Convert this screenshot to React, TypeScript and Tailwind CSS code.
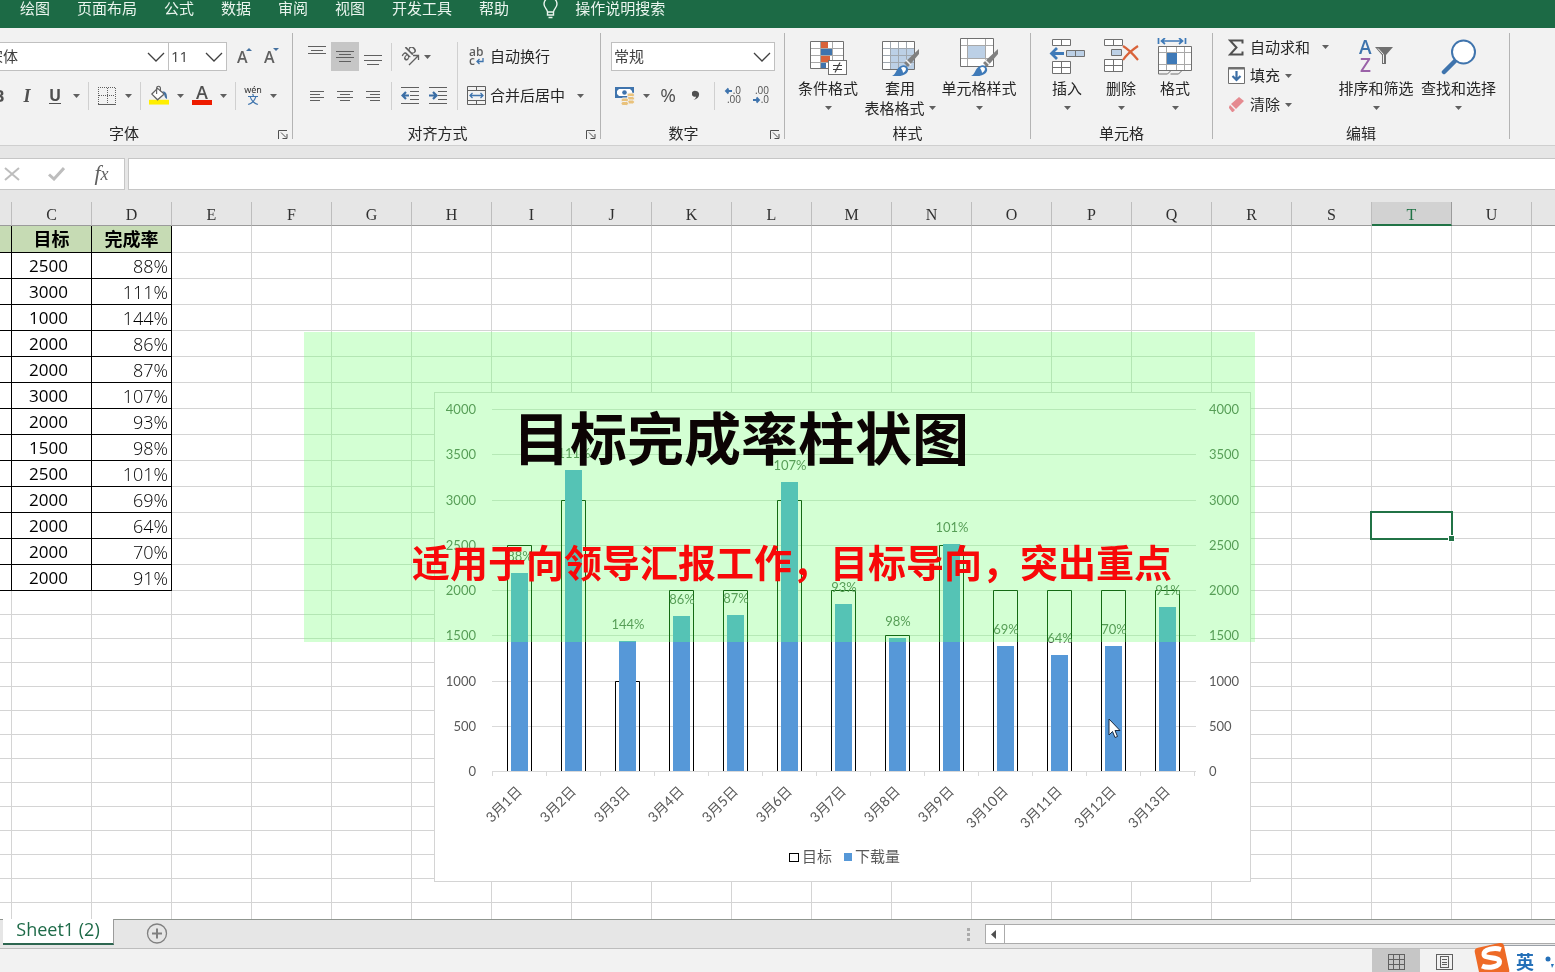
import type { ReactNode } from "react";

const MENU = ["绘图", "页面布局", "公式", "数据", "审阅", "视图", "开发工具", "帮助"];

const COLUMNS = "CDEFGHIJKLMNOPQRSTUV".split("");

type Day = { date: string; target: number; actual: number; rate: string };

const DAYS: Day[] = [
  { date: "3月1日", target: 2500, actual: 2185, rate: "88%" },
  { date: "3月2日", target: 3000, actual: 3330, rate: "111%" },
  { date: "3月3日", target: 1000, actual: 1440, rate: "144%" },
  { date: "3月4日", target: 2000, actual: 1715, rate: "86%" },
  { date: "3月5日", target: 2000, actual: 1725, rate: "87%" },
  { date: "3月6日", target: 3000, actual: 3195, rate: "107%" },
  { date: "3月7日", target: 2000, actual: 1850, rate: "93%" },
  { date: "3月8日", target: 1500, actual: 1475, rate: "98%" },
  { date: "3月9日", target: 2500, actual: 2510, rate: "101%" },
  { date: "3月10日", target: 2000, actual: 1385, rate: "69%" },
  { date: "3月11日", target: 2000, actual: 1285, rate: "64%" },
  { date: "3月12日", target: 2000, actual: 1385, rate: "70%" },
  { date: "3月13日", target: 2000, actual: 1815, rate: "91%" },
];

/* ---------- small shared pieces ---------- */

function Arrow() {
  return (
    <svg width="7" height="4" viewBox="0 0 7 4" className="shrink-0">
      <path d="M0 0h7L3.5 4z" fill="#606060" />
    </svg>
  );
}

function Drop({ label }: { label: string }) {
  return (
    <button type="button" aria-label={label} className="flex h-7 w-[7px] shrink-0 items-center">
      <Arrow />
    </button>
  );
}

function Tool({ label, children, className = "w-5" }: { label: string; children: ReactNode; className?: string }) {
  return (
    <button
      type="button"
      aria-label={label}
      className={`flex h-[29px] shrink-0 items-center justify-center text-[#505050] ${className}`}
    >
      {children}
    </button>
  );
}

function Rule() {
  return <span className="h-7 w-px shrink-0 bg-[#d0d0d0]" />;
}

function Combo({ label, value, className, pad }: { label: string; value: string; className: string; pad: string }) {
  return (
    <div className={`relative h-[29px] shrink-0 ${className}`}>
      <select
        aria-label={label}
        defaultValue={value}
        className={`h-full w-full appearance-none border border-[#c0c0c0] bg-white text-[15px] text-[#404040] outline-none ${pad}`}
      >
        <option>{value}</option>
      </select>
      <svg width="18" height="10" viewBox="0 0 18 10" className="pointer-events-none absolute right-1 top-[10px]">
        <path d="M1 1l8 8 8-8" fill="none" stroke="#404040" strokeWidth="1.3" />
      </svg>
    </div>
  );
}

function Group({
  name,
  className,
  launcher,
  children,
}: {
  name: string;
  className: string;
  launcher?: boolean;
  children: ReactNode;
}) {
  return (
    <section aria-label={name} className={`flex h-[106px] shrink-0 flex-col border-r border-[#b4b4b4] ${className}`}>
      {children}
      <div className="mt-auto flex items-end leading-3">
        <span className="flex-1 text-center">{name}</span>
        {launcher && (
          <button type="button" aria-label={`${name}设置`} className="flex h-[9px] w-[18px] justify-center">
            <svg width="10" height="9" viewBox="0 0 10 9" fill="none" stroke="#505050">
              <path d="M.5 9V.5H9M3 2.5l5 5M9 4v4.5H4.5" />
            </svg>
          </button>
        )}
      </div>
    </section>
  );
}

function BigButton({ icon, lines, arrow, className }: { icon: ReactNode; lines: string[]; arrow?: boolean; className: string }) {
  return (
    <button type="button" className={`flex shrink-0 flex-col items-center pt-[5px] ${className}`}>
      <span className="mb-[2px] flex h-[38px] items-center justify-center">{icon}</span>
      {lines.map((l, i) => (
        <span key={l} className="flex items-center gap-1 whitespace-nowrap leading-5">
          {l}
          {i === 1 && <Arrow />}
        </span>
      ))}
      {arrow && (
        <span className="flex h-5 items-center">
          <Arrow />
        </span>
      )}
    </button>
  );
}

/* ---------- icons ---------- */

function Lines({ rows, w, h }: { rows: [number, number, number][]; w: number; h: number }) {
  return (
    <svg width={w} height={h} viewBox={`0 0 ${w} ${h}`} shapeRendering="crispEdges">
      {rows.map(([x, y, len]) => (
        <rect key={y} x={x} y={y} width={len} height="1" fill="#606060" />
      ))}
    </svg>
  );
}

function GrowFont({ down }: { down?: boolean }) {
  return (
    <svg width="17" height="20" viewBox="0 0 17 20">
      <text x="1" y="16" fontFamily="Open Sans" fontSize="16" fontWeight="600" fill="#606060">
        A
      </text>
      <path d={down ? "M10 1h6l-3 3z" : "M10 4h6l-3-3z"} fill="#44719f" />
    </svg>
  );
}

function BordersIcon() {
  return (
    <svg width="18" height="18" viewBox="0 0 18 18" fill="none" stroke="#606060" shapeRendering="crispEdges">
      <path d="M.5 17V.5h17V17M9 1v16M1 8.5h16" strokeDasharray="1 1" />
      <path d="M0 17h18" />
    </svg>
  );
}

function BucketIcon() {
  return (
    <svg width="21" height="21" viewBox="0 0 21 21">
      <rect y="15" width="21" height="5" fill="#ffee00" />
      <path d="M9 3l7 6-7 6-6-6z" fill="#fff" stroke="#606060" strokeWidth="1.3" />
      <path d="M8 9V3c0-3 4-3 4 0v3" fill="none" stroke="#606060" strokeWidth="1.2" />
      <path d="M14 6c4 0 5 3 5 8-2 0-3-3-3-5z" fill="#44719f" />
    </svg>
  );
}

function FontColorIcon() {
  return (
    <svg width="20" height="20" viewBox="0 0 20 20">
      <text x="10" y="13" textAnchor="middle" fontFamily="Open Sans" fontSize="18" fontWeight="600" fill="#505050">
        A
      </text>
      <rect y="14" width="20" height="5" fill="#ee1c00" />
    </svg>
  );
}

function PhoneticIcon() {
  return (
    <svg width="18" height="20" viewBox="0 0 18 20">
      <text x="9" y="7" textAnchor="middle" fontFamily="Noto Sans" fontSize="9" fill="#303030">
        wén
      </text>
      <text x="9" y="18" textAnchor="middle" fontFamily="Noto Sans CJK SC" fontSize="11" fontWeight="500" fill="#3f74ad">
        文
      </text>
    </svg>
  );
}

function OrientationIcon() {
  return (
    <svg width="20" height="20" viewBox="0 0 20 20">
      <text x="5" y="15" transform="rotate(-45 5 14)" fontFamily="Open Sans" fontSize="14" fontWeight="600" fill="#606060">
        ab
      </text>
      <path d="M9 18L18 9M13 8.500h5.500V13" fill="none" stroke="#606060" strokeWidth="1.3" />
    </svg>
  );
}

function IndentIcon({ out }: { out?: boolean }) {
  return (
    <svg width="18" height="17" viewBox="0 0 18 17">
      <path d="M0 .5h18M9 4.500h9M9 8.500h9M9 12.500h9M0 16.500h18" stroke="#606060" shapeRendering="crispEdges" />
      <path
        d={out ? "M8 8.500H2M5 5L1.500 8.500 5 12" : "M0 8.500h6M4 5l3.500 3.500L4 12"}
        fill="none"
        stroke="#3b6ea5"
        strokeWidth="2.200"
      />
    </svg>
  );
}

function WrapIcon() {
  return (
    <svg width="16" height="19" viewBox="0 0 16 19">
      <g fontFamily="Open Sans" fontSize="12" fontWeight="600" fill="#606060">
        <text x="1" y="9">
          ab
        </text>
        <text x="1" y="18">
          c
        </text>
      </g>
      <path d="M15 11v3.500H9M11.500 12L9 14.500l2.500 2.500" fill="none" stroke="#3f74ad" strokeWidth="1.3" />
    </svg>
  );
}

function MergeIcon() {
  return (
    <svg width="19" height="19" viewBox="0 0 19 19" fill="none">
      <path d="M.5.5h18v18H.5zM.5 4.500h18M.5 14.500h18M9.500.5v4M9.500 14.500v4" stroke="#606060" />
      <path d="M3 9.500h13M5.500 7L3 9.500 5.500 12M13.500 7L16 9.500 13.500 12" stroke="#3f74ad" strokeWidth="1.3" />
    </svg>
  );
}

function MoneyIcon() {
  return (
    <svg width="20" height="20" viewBox="0 0 20 20">
      <rect y="1" width="19" height="11" fill="#3f74ad" />
      <path d="M4 3h11l2 2v3l-2 2H4L2 8V5z" fill="#fff" />
      <circle cx="9.500" cy="6.500" r="2.300" fill="#3f74ad" />
      <g fill="#e9c27c" stroke="#f2f2f2" strokeWidth="1">
        <rect x="12" y="7" width="7.500" height="4" rx="2" />
        <rect x="12" y="10.500" width="7.500" height="4" rx="2" />
        <rect x="12" y="14" width="7.500" height="4" rx="2" />
        <rect x="6" y="12" width="7.500" height="4" rx="2" />
        <rect x="6" y="15.500" width="7.500" height="4" rx="2" />
      </g>
    </svg>
  );
}

function DecimalIcon({ less }: { less?: boolean }) {
  return (
    <svg width="18" height="19" viewBox="0 0 18 19">
      <g fontFamily="Open Sans" fontSize="10" fontWeight="500" fill="#505050" textAnchor="end">
        <text x="17" y="8">
          {less ? ".00" : ".0"}
        </text>
        <text x="17" y="17">
          {less ? ".0" : ".00"}
        </text>
      </g>
      <path
        d={less ? "M1 14h6M4.500 11.500L7 14l-2.500 2.500" : "M8 5H2M4.500 2.500L2 5l2.500 2.500"}
        fill="none"
        stroke="#3f74ad"
        strokeWidth="1.900"
      />
    </svg>
  );
}

function Brush() {
  return (
    <g>
      <path d="M38 11v5L27 29l-4-4z" fill="#808080" />
      <path d="M25 22l5 5" stroke="#f2f2f2" strokeWidth="1.500" />
      <path d="M11 38c4-1 4-8 9-10 4-2 8 1 7 5-2 5-10 6-16 5z" fill="#3f7ab8" />
      <path d="M20 30c2-2 5-1 5 1s-2 3-3 4c0-2-1-3-2-5z" fill="#fff" />
    </g>
  );
}

function ConditionalIcon() {
  return (
    <svg width="36" height="38" viewBox="1 -2 36 38" className="overflow-visible">
      <path d="M1.500 1.500h33v27h-33z" fill="#fff" />
      <rect x="12" y="2" width="7" height="6" fill="#d9633a" />
      <rect x="12" y="9" width="11" height="6" fill="#3f74ad" />
      <rect x="12" y="16" width="9" height="6" fill="#d9633a" />
      <rect x="12" y="23" width="5" height="5" fill="#3f74ad" />
      <path d="M1.500 8.500h33M1.500 15.500h33M1.500 22.500h33M11.500 1.500v27M23.500 1.500v27" stroke="#a8a8a8" />
      <path d="M1.500 1.500h33v27h-33z" fill="none" stroke="#707070" />
      <rect x="19.500" y="20.500" width="18" height="14" fill="#fff" stroke="#707070" />
      <path d="M24 25.500h9M24 29.500h9M31 22.500l-5 10" stroke="#404040" strokeWidth="1.200" />
    </svg>
  );
}

function TableFormatIcon() {
  return (
    <svg width="38" height="38" viewBox="0 0 38 38">
      <path d="M1.500 3.500h32v28h-32z" fill="#fff" />
      <path d="M10 10h23v21H10z" fill="#bcd0e6" />
      <path d="M1.500 10.500h32M1.500 17.500h32M1.500 24.500h32M9.500 3.500v28M17.500 3.500v28M25.500 3.500v28" stroke="#a0a8b0" />
      <path d="M1.500 3.500h32v28h-32z" fill="none" stroke="#707070" />
      <Brush />
    </svg>
  );
}

function CellStyleIcon() {
  return (
    <svg width="38" height="38" viewBox="0 0 38 38">
      <path d="M.5.5h33v28H.5z" fill="#fff" />
      <path d="M.5 7.500h33M.5 20.500h33M7.500.5v28M25.500.5v28" stroke="#a8a8a8" />
      <rect x="8" y="8" width="17" height="12" fill="#bcd0e6" />
      <path d="M.5.5h33v28H.5z" fill="none" stroke="#707070" />
      <Brush />
    </svg>
  );
}

function InsertIcon() {
  return (
    <svg width="36" height="36" viewBox="0 0 36 36">
      <g fill="#fff" stroke="#707070">
        <path d="M3.500.5h18v6h-18zM12.500.5v6M3.500 22.500h18v12h-18zM12.500 22.500v12M3.500 28.500h18" />
        <path d="M17.500 11.500h18v6h-18zM26.500 11.500v6" fill="#bcd0e6" />
      </g>
      <path d="M15 14.500H3M8 9l-5.500 5.500L8 20" fill="none" stroke="#3f7ab8" strokeWidth="2.800" />
    </svg>
  );
}

function DeleteIcon() {
  return (
    <svg width="36" height="36" viewBox="0 0 36 36">
      <g fill="#fff" stroke="#707070">
        <path d="M1.500.5h18v6h-18zM10.500.5v6M1.500 20.500h18v12h-18zM10.500 20.500v12M1.500 26.500h18" />
        <path d="M8.500 10.500h10v6h-10z" fill="#bcd0e6" />
      </g>
      <path d="M20 7c5 3 10 8 15 14M35 7c-6 4-11 8-15 14" fill="none" stroke="#d9633a" strokeWidth="2.200" />
    </svg>
  );
}

function FormatIcon() {
  return (
    <svg width="36" height="38" viewBox="0 0 36 38">
      <path d="M1.500 0v6M28.500 0v6M4 3h22M8 0L4.500 3 8 6M22 0l3.500 3L22 6" fill="none" stroke="#3f7ab8" strokeWidth="1.700" />
      <path d="M1.500 8.500h33v24h-33z" fill="#fff" />
      <path d="M1.500 14.500h33M1.500 26.500h33M9.500 8.500v24M19.500 8.500v24M27.500 8.500v24" stroke="#a8a8a8" />
      <rect x="10" y="15" width="10" height="11" fill="#3f7ab8" />
      <path d="M1.500 8.500h33v24h-33z" fill="none" stroke="#707070" />
      <path d="M1.500 32v4h9l3-3M13.500 36h8l3-3" fill="none" stroke="#707070" />
    </svg>
  );
}

function SortIcon() {
  return (
    <svg width="36" height="36" viewBox="0 0 36 36">
      <g fontFamily="Open Sans" fontSize="19" fontWeight="600">
        <text x="1" y="15" fill="#3f74ad">
          A
        </text>
        <text x="2" y="33" fill="#9a62a8">
          Z
        </text>
      </g>
      <path d="M17 8h18l-7 8v9h-4v-9z" fill="#707070" />
      <path d="M20 9.500l5.500 6V24" fill="none" stroke="#f2f2f2" />
    </svg>
  );
}

function FindIcon() {
  return (
    <svg width="36" height="36" viewBox="0 0 36 36">
      <path d="M14 22L3 33" stroke="#3f74ad" strokeWidth="4.500" strokeLinecap="round" />
      <circle cx="22.500" cy="13" r="11.500" fill="#fff" stroke="#3f74ad" strokeWidth="2" />
    </svg>
  );
}

function SumIcon() {
  return (
    <svg width="16" height="17" viewBox="0 0 16 17">
      <path d="M14.500 4.500V1.500H2l6.500 7L2 15.500h12.500v-3" fill="none" stroke="#505050" strokeWidth="2" />
    </svg>
  );
}

function FillIcon() {
  return (
    <svg width="17" height="17" viewBox="0 0 17 17">
      <path d="M.5.5h16v16H.5z" fill="#fff" stroke="#707070" />
      <path d="M.5 1.500h16" stroke="#707070" strokeWidth="2" />
      <path d="M8.500 4v8M4.500 9l4 4 4-4" fill="none" stroke="#3b6ea5" strokeWidth="2.200" />
    </svg>
  );
}

function EraserIcon() {
  return (
    <svg width="17" height="17" viewBox="0 0 17 17">
      <path d="M11 1l5 4-8 8-5-5z" fill="#e58a90" />
      <path d="M2 9l5 5-2 2H4l-3-4v-1z" fill="#e58a90" />
    </svg>
  );
}

/* ---------- ribbon ---------- */

const TOP: [number, number, number][] = [[0, 0, 18], [3, 4, 12], [0, 7, 18]];
const MIDDLE: [number, number, number][] = [[0, 0, 18], [3, 3, 12], [0, 6, 18], [3, 10, 12]];
const BOTTOM: [number, number, number][] = [[0, 0, 18], [3, 5, 12], [0, 5, 18], [3, 9, 12]];
const LEFT: [number, number, number][] = [[0, 0, 14], [0, 3, 10], [0, 6, 14], [0, 9, 10]];
const CENTER: [number, number, number][] = [[0, 0, 16], [3, 3, 10], [0, 6, 16], [3, 9, 10]];
const RIGHT: [number, number, number][] = [[0, 0, 14], [4, 3, 10], [0, 6, 14], [4, 9, 10]];

function Ribbon() {
  return (
    <div className="flex h-[118px] shrink-0 overflow-hidden border-b border-[#cfcfcf] bg-[#f2f2f2] pt-[5px]">
      <Group name="字体" launcher className="-ml-[26px] w-[319px]">
        <div className="mt-[9px] flex">
          <Combo label="字体" value="宋体" className="w-[195px]" pad="pl-[13px]" />
          <Combo label="字号" value="11" className="-ml-px w-[59px]" pad="pl-[2px]" />
          <Tool label="增大字号" className="ml-1 w-[27px]">
            <GrowFont />
          </Tool>
          <Tool label="减小字号" className="w-[27px]">
            <GrowFont down />
          </Tool>
        </div>
        <div className="mt-[10px] flex items-center gap-2 pl-[15px]">
          <Tool label="加粗">
            <b className="text-base">B</b>
          </Tool>
          <Tool label="倾斜">
            <b className="font-['Liberation_Serif',serif] text-lg italic">I</b>
          </Tool>
          <Tool label="下划线">
            <span className="border-b border-[#505050] text-base font-bold leading-4">U</span>
          </Tool>
          <Drop label="下划线选项" />
          <Rule />
          <Tool label="边框">
            <BordersIcon />
          </Tool>
          <Drop label="边框选项" />
          <Rule />
          <Tool label="填充颜色">
            <BucketIcon />
          </Tool>
          <Drop label="填充颜色选项" />
          <Tool label="字体颜色">
            <FontColorIcon />
          </Tool>
          <Drop label="字体颜色选项" />
          <Rule />
          <Tool label="拼音" className="w-[18px]">
            <PhoneticIcon />
          </Tool>
          <Drop label="拼音选项" />
        </div>
      </Group>

      <Group name="对齐方式" launcher className="w-[308px]">
        <div className="mt-[9px] flex pl-[10px]">
          <div className="grid gap-[10px]">
            <div className="flex items-center">
              <Tool label="顶端对齐" className="w-7 pb-3">
                <Lines rows={TOP} w={18} h={9} />
              </Tool>
              <Tool label="垂直居中" className="w-7 bg-[#c6c6c6]">
                <Lines rows={MIDDLE} w={18} h={11} />
              </Tool>
              <Tool label="底端对齐" className="w-7 pt-1.5">
                <Lines rows={BOTTOM} w={18} h={10} />
              </Tool>
            </div>
            <div className="flex items-center">
              <Tool label="左对齐" className="w-7">
                <Lines rows={LEFT} w={14} h={10} />
              </Tool>
              <Tool label="居中" className="w-7">
                <Lines rows={CENTER} w={16} h={10} />
              </Tool>
              <Tool label="右对齐" className="w-7">
                <Lines rows={RIGHT} w={14} h={10} />
              </Tool>
            </div>
          </div>
          <div className="ml-1 grid w-[66px] gap-[10px]">
            <div className="flex items-center">
              <Rule />
              <Tool label="方向" className="ml-1 w-7">
                <OrientationIcon />
              </Tool>
              <Drop label="方向选项" />
            </div>
            <div className="flex items-center">
              <Rule />
              <Tool label="减少缩进量" className="ml-1 w-7">
                <IndentIcon out />
              </Tool>
              <Tool label="增加缩进量" className="w-7">
                <IndentIcon />
              </Tool>
            </div>
          </div>
          <div className="grid gap-[10px] border-l border-[#d0d0d0] pl-2">
            <button type="button" className="flex h-[29px] items-center gap-1">
              <span className="flex w-5 justify-center">
                <WrapIcon />
              </span>
              自动换行
            </button>
            <div className="flex items-center gap-3">
              <button type="button" className="flex h-[29px] items-center gap-1">
                <span className="flex w-5 justify-center">
                  <MergeIcon />
                </span>
                合并后居中
              </button>
              <Drop label="合并选项" />
            </div>
          </div>
        </div>
      </Group>

      <Group name="数字" launcher className="w-[184px]">
        <div className="mt-[9px] flex pl-[10px]">
          <Combo label="数字格式" value="常规" className="w-[164px]" pad="pl-[2px]" />
        </div>
        <div className="mt-[10px] flex items-center gap-2 pl-[14px]">
          <Tool label="会计数字格式">
            <MoneyIcon />
          </Tool>
          <Drop label="会计数字格式选项" />
          <Tool label="百分比样式">
            <span className="text-[19px]">%</span>
          </Tool>
          <Tool label="千位分隔样式">
            <svg width="8" height="11" viewBox="0 0 8 11">
              <path d="M4 1a3 3 0 1 0 0 5.500C4 8 3 9 1.500 10 6 9 7.500 6.500 7 3.500 6.600 2 5.500 1 4 1z" fill="#505050" />
            </svg>
          </Tool>
          <Rule />
          <Tool label="增加小数位数">
            <DecimalIcon />
          </Tool>
          <Tool label="减少小数位数">
            <DecimalIcon less />
          </Tool>
        </div>
      </Group>

      <Group name="样式" className="w-[246px]">
        <div className="flex items-start pl-[10px]">
          <BigButton icon={<ConditionalIcon />} lines={["条件格式"]} arrow className="w-[66px]" />
          <BigButton icon={<TableFormatIcon />} lines={["套用", "表格格式"]} className="w-[78px]" />
          <BigButton icon={<CellStyleIcon />} lines={["单元格样式"]} arrow className="w-20" />
        </div>
      </Group>

      <Group name="单元格" className="w-[182px]">
        <div className="flex items-start pl-[9px]">
          <BigButton icon={<InsertIcon />} lines={["插入"]} arrow className="w-[54px]" />
          <BigButton icon={<DeleteIcon />} lines={["删除"]} arrow className="w-[54px]" />
          <BigButton icon={<FormatIcon />} lines={["格式"]} arrow className="w-[54px]" />
        </div>
      </Group>

      <Group name="编辑" className="w-[297px]">
        <div className="flex items-start pl-[15px]">
          <div className="flex w-[107px] flex-col items-start">
            <div className="flex h-7 items-center gap-3">
              <button type="button" className="flex items-center gap-[5px]">
                <span className="flex w-[17px]">
                  <SumIcon />
                </span>
                自动求和
              </button>
              <Drop label="求和选项" />
            </div>
            <button type="button" className="flex h-[29px] items-center gap-[5px]">
              <FillIcon />
              填充
              <Arrow />
            </button>
            <button type="button" className="flex h-[29px] items-center gap-[5px]">
              <EraserIcon />
              清除
              <Arrow />
            </button>
          </div>
          <BigButton icon={<SortIcon />} lines={["排序和筛选"]} arrow className="w-[82px]" />
          <BigButton icon={<FindIcon />} lines={["查找和选择"]} arrow className="w-[83px]" />
        </div>
      </Group>
    </div>
  );
}

/* ---------- formula bar ---------- */

function FormulaBar() {
  return (
    <div className="my-3 flex h-8 shrink-0 gap-[3px]">
      <div className="-ml-3 flex shrink-0 border border-[#c6c6c6] bg-white">
        <Tool label="取消" className="h-full w-[45px]">
          <svg width="16" height="14" viewBox="0 0 16 14">
            <path d="M1 1l14 12M15 1L1 13" stroke="#bdbdbd" strokeWidth="2" />
          </svg>
        </Tool>
        <Tool label="输入" className="h-full w-[45px]">
          <svg width="17" height="14" viewBox="0 0 17 14">
            <path d="M1 7.500l5 4.500L16 1" fill="none" stroke="#bdbdbd" strokeWidth="3" />
          </svg>
        </Tool>
        <Tool label="插入函数" className="h-full w-[45px]">
          <i className="font-['Liberation_Serif',serif] text-[22px] leading-5 text-[#606060]">
            f<span className="text-lg">x</span>
          </i>
        </Tool>
      </div>
      <input aria-label="编辑栏" className="min-w-0 flex-1 border border-r-0 border-[#c6c6c6] bg-white px-2 outline-none" />
    </div>
  );
}

/* ---------- sheet ---------- */

const PLAIN = "border-b border-r border-[#d4d4d4]";
const DATA = "border-b border-r border-black";

function Sheet() {
  const rest = COLUMNS.slice(2);
  return (
    <table className="w-[1612px] table-fixed border-separate border-spacing-0 bg-white text-[17px] leading-5 text-black">
      <colgroup>
        <col className="w-3" />
        {COLUMNS.map((c) => (
          <col key={c} className="w-20" />
        ))}
      </colgroup>
      <thead>
        <tr className="h-6 bg-[#e6e6e6] font-['Liberation_Serif',serif] text-base leading-4 text-[#303030]">
          <td className="border-b border-r border-b-[#9b9b9b] border-r-[#bdbdbd]" />
          {COLUMNS.map((c) => (
            <th
              key={c}
              scope="col"
              className={
                c === "T"
                  ? "border-b-2 border-r border-b-[#217346] border-r-[#9b9b9b] bg-[#d2d2d2] p-0 pt-1 font-normal text-[#217346]"
                  : "border-b border-r border-b-[#9b9b9b] border-r-[#bdbdbd] p-0 pt-[3px] font-normal"
              }
            >
              {c}
            </th>
          ))}
        </tr>
      </thead>
      <tbody>
        <tr className="h-[27px] text-lg leading-5">
          <td className={`${DATA} bg-[#c6dbb4]`} />
          <td className={`${DATA} bg-[#c6dbb4] p-0 text-center font-bold`}>目标</td>
          <td className={`${DATA} bg-[#c6dbb4] p-0 text-center font-bold`}>完成率</td>
          {rest.map((c) => (
            <td key={c} className={PLAIN} />
          ))}
        </tr>
        {DAYS.map((d, i) => (
          <tr key={d.date} className="h-[26px]">
            <td className={DATA} />
            <td className={`${DATA} p-0 pr-[6px] text-center`}>{d.target}</td>
            <td className={`${DATA} p-0 pr-[3px] text-right text-lg font-light leading-5`}>{d.rate}</td>
            {rest.map((c) => (
              <td key={c} className={c === "T" && i === 10 ? `${PLAIN} relative` : PLAIN}>
                {c === "T" && i === 10 && (
                  <span className="absolute -inset-x-[2px] -inset-y-[2px] border-2 border-[#217346]">
                    <span className="absolute -bottom-1 -right-1 size-[7px] border border-white bg-[#217346]" />
                  </span>
                )}
              </td>
            ))}
          </tr>
        ))}
        {Array.from({ length: 14 }, (_, r) => (
          <tr key={r} className="h-6">
            <td className={PLAIN} />
            {COLUMNS.map((c) => (
              <td key={c} className={PLAIN} />
            ))}
          </tr>
        ))}
      </tbody>
    </table>
  );
}

/* ---------- chart ---------- */

const BASE = 379;
const yOf = (v: number) => Math.round(BASE - v * 0.0905);
const xOf = (i: number) => 85 + i * 54;

function Chart() {
  const ticks = [0, 500, 1000, 1500, 2000, 2500, 3000, 3500, 4000];
  return (
    <svg
      width="817"
      height="490"
      viewBox="0 0 817 490"
      className="absolute left-[434px] top-[190px]"
      fontFamily="Lato, 'Noto Sans CJK SC', sans-serif"
      fontSize="13"
      fill="#595959"
    >
      <rect x=".5" y=".5" width="816" height="489" fill="#fff" stroke="#d4d4d4" />
      {ticks.map((t) => (
        <g key={t}>
          <rect x="58" y={yOf(t)} width="704" height="1" fill="#d9d9d9" />
          <text x="42" y={yOf(t) + 5} textAnchor="end">
            {t}
          </text>
          <text x="775" y={yOf(t) + 5}>
            {t}
          </text>
        </g>
      ))}
      {Array.from({ length: 14 }, (_, i) => (
        <rect key={i} x={58 + i * 54} y={BASE} width="1" height="5" fill="#d9d9d9" />
      ))}
      {DAYS.map((d, i) => (
        <g key={d.date}>
          <path
            d={`M${xOf(i) - 11.5} ${BASE}V${yOf(d.target) + 0.5}H${xOf(i) + 12.5}V${BASE}`}
            fill="none"
            stroke="#000"
          />
          <rect x={xOf(i) - 8} y={yOf(d.actual)} width="17" height={BASE - yOf(d.actual)} fill="#5698d8" />
          <text x={xOf(i) + 1} y={yOf(d.actual) - 12} textAnchor="middle">
            {d.rate}
          </text>
          <text
            x={xOf(i) + 4}
            y="400"
            fontSize="14"
            textAnchor="end"
            transform={`rotate(-45 ${xOf(i) + 4} 400)`}
          >
            {d.date}
          </text>
        </g>
      ))}
      <rect x="355.500" y="461.500" width="9" height="8" fill="#fff" stroke="#000" />
      <rect x="410" y="461" width="8" height="8" fill="#5698d8" />
      <g fontSize="15">
        <text x="368" y="470">
          目标
        </text>
        <text x="421" y="470">
          下载量
        </text>
      </g>
    </svg>
  );
}

function Captions() {
  return (
    <>
      <div className="absolute left-[304px] top-[130px] h-[310px] w-[951px] bg-[#cfffcf] mix-blend-multiply" />
      <div className="absolute left-[304px] top-[130px] h-[310px] w-[951px] bg-[#146a14] mix-blend-screen" />
      <p className="absolute left-[513px] top-[204px] whitespace-nowrap text-[57px] font-bold leading-[64px] text-[#0c0404]">
        目标完成率柱状图
      </p>
      <p className="absolute left-[412px] top-[336px] whitespace-nowrap text-[38px] font-bold leading-[48px] text-[#f80808]">
        适用于向领导汇报工作，目标导向，突出重点
      </p>
      <svg width="14" height="22" viewBox="0 0 14 22" className="absolute left-[1108px] top-[516px]">
        <path d="M1 1v16l3.500-3.500L7 19.500l2.500-1L7 12.500h5z" fill="#fff" stroke="#1a2a40" />
      </svg>
    </>
  );
}

/* ---------- bottom bars ---------- */

function SheetTabs() {
  return (
    <div className="flex h-[30px] shrink-0 items-start border-b border-t border-b-[#bdbdbd] border-t-[#8f958f] bg-[#e6e6e6]">
      <button
        type="button"
        className="-mt-px ml-[3px] h-[26px] w-[111px] border-b-2 border-r border-b-[#2d6650] border-r-[#9b9b9b] bg-white pb-1 text-lg leading-5 text-[#1e6a48]"
      >
        Sheet1 (2)
      </button>
      <button type="button" aria-label="新工作表" className="ml-8 mt-[3px]">
        <svg width="22" height="21" viewBox="0 0 22 21" fill="none" stroke="#808080">
          <circle cx="11" cy="10.500" r="9.500" strokeWidth="1.300" />
          <path d="M11 5.500v10M6 10.500h10" strokeWidth="2" />
        </svg>
      </button>
      <div className="ml-auto flex w-[588px] items-start">
        <span className="mt-2 grid gap-[2px]">
          <span className="size-[3px] bg-[#ababab]" />
          <span className="size-[3px] bg-[#ababab]" />
          <span className="size-[3px] bg-[#ababab]" />
        </span>
        <button
          type="button"
          aria-label="向左滚动"
          className="ml-[15px] mt-1 flex h-5 w-5 items-center justify-center border border-[#ababab] bg-white pr-[3px]"
        >
          <svg width="5" height="9" viewBox="0 0 5 9">
            <path d="M5 0v9L0 4.500z" fill="#505050" />
          </svg>
        </button>
        <span className="-ml-px mt-1 h-5 flex-1 border border-r-0 border-[#ababab] bg-white" />
      </div>
    </div>
  );
}

function StatusBar() {
  return (
    <div className="relative flex h-[23px] shrink-0 justify-end bg-[#f2f2f2] pr-[87px]">
      <button type="button" aria-label="普通视图" className="flex w-12 items-start justify-center bg-[#c6c6c6] pt-[5px]">
        <svg width="17" height="16" viewBox="0 0 17 16" fill="none" stroke="#606060" shapeRendering="crispEdges">
          <path d="M.5.5h16v15H.5zM.5 5.500h16M.5 10.500h16M5.500.5v15M11.500.5v15" />
        </svg>
      </button>
      <button type="button" aria-label="页面布局视图" className="flex w-12 items-start justify-center pt-[5px]">
        <svg width="17" height="16" viewBox="0 0 17 16" fill="none" stroke="#606060" shapeRendering="crispEdges">
          <path d="M.5.5h16v15H.5zM4.500 2.500h8v11h-8zM6 5.500h5M6 8.500h5M6 10.500h5" />
        </svg>
      </button>
      <div className="absolute right-0 top-[-4px] flex h-7 w-[66px] items-center gap-2 border-t border-[#9aa0a8] bg-white pl-[27px] pt-1 text-[18px] font-bold leading-5 text-[#2570b8]">
        <span>英</span>
        <svg width="12" height="16" viewBox="0 0 12 16" fill="#2570b8" className="shrink-0">
          <circle cx="6" cy="5" r="2.500" />
          <path d="M9 10h3l-2 4z" />
        </svg>
      </div>
      <svg width="37" height="31" viewBox="0 0 37 31" className="absolute bottom-0 right-[45px]">
        <rect x="4" y="4" width="30" height="32" rx="4" fill="#ee6a26" transform="rotate(-12 19 20)" />
        <path
          d="M28 8.500C22 6.500 10.500 8 11 13.500c.5 4.500 15 2 15.500 7C27 25.500 16 28 9 25"
          fill="none"
          stroke="#fff"
          strokeWidth="5"
        />
      </svg>
    </div>
  );
}

export default function App() {
  return (
    <div className="flex h-screen flex-col overflow-hidden bg-[#e6e6e6] font-['Open_Sans','Noto_Sans_CJK_SC',sans-serif] text-[15px] text-[#262626]">
      <nav className="flex h-7 shrink-0 items-center gap-[27px] bg-[#1c6a45] pb-3 pl-5 leading-4 text-[#eaf5ee]">
        {MENU.map((m) => (
          <a key={m} href="#" className="whitespace-nowrap">
            {m}
          </a>
        ))}
        <a href="#" className="ml-[7px] flex items-center gap-[17px] whitespace-nowrap">
          <svg width="15" height="22" viewBox="0 0 15 22" fill="none" stroke="#eaf5ee" strokeWidth="1.400">
            <path d="M4.500 15c0-3-3.500-4-3.500-8a6.500 6.500 0 0 1 13 0c0 4-3.500 5-3.500 8zM4.500 15v3h6v-3M5.500 20.500h4" />
          </svg>
          操作说明搜索
        </a>
      </nav>
      <Ribbon />
      <FormulaBar />
      <main className="relative min-h-0 flex-1 overflow-hidden">
        <Sheet />
        <Chart />
        <Captions />
      </main>
      <SheetTabs />
      <StatusBar />
    </div>
  );
}
